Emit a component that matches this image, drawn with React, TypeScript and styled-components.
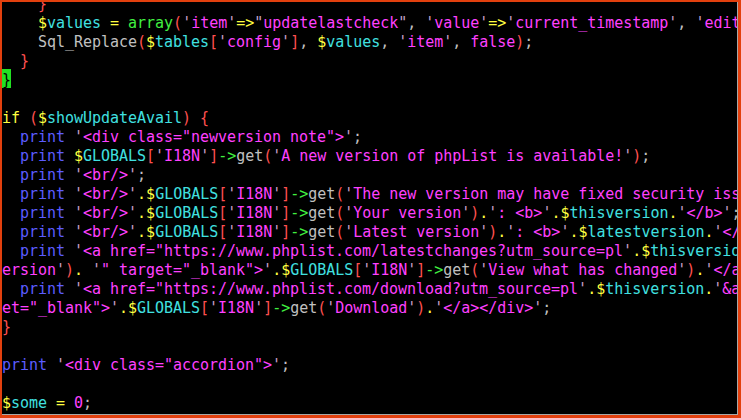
import React from "react";
import styled, { createGlobalStyle } from "styled-components";

const Global = createGlobalStyle`
  html, body { margin: 0; padding: 0; background: #000; }
  #root { width: 741px; height: 418px; }
`;

const palette: Record<string, string> = {
  n: "#c0c0c0",
  k: "#5c5cff",
  s: "#ff40ff",
  q: "#c8a0c8",
  v: "#40e0e0",
  d: "#ffff40",
  o: "#ffff40",
  p: "#ff5050",
  g: "#40f040",
  y: "#ffff40",
};

const Frame = styled.div`
  box-sizing: border-box;
  width: 741px;
  height: 418px;
  display: flex;
  background: #000;
  border-style: solid;
  border-color: #e2400e;
  border-width: 2px 3px 3px 2px;
`;

const Screen = styled.div`
  flex: 1;
  overflow: hidden;
  border-right: 1px solid #a8a8a8;
  border-bottom: 1px solid #a8a8a8;
  background: #000;
`;

const Code = styled.div`
  margin-top: -9px;
  font-family: "DejaVu Sans Mono", "Liberation Mono", monospace;
  font-size: 15px;
  letter-spacing: -0.03px;
`;

const Row = styled.div`
  height: 19px;
  line-height: 23px;
  white-space: pre;
  color: #c0c0c0;
`;

const Tok = styled.span<{ $c: string }>`
  color: ${(p) => palette[p.$c] ?? "#c0c0c0"};
`;

const Cursor = styled.span`
  display: inline-block;
  width: 9px;
  height: 19px;
  line-height: 23px;
  vertical-align: top;
  background: #22e022;
  color: #000;
`;

type Seg = [string, string];

const Q: Seg = ["q", "'"];
const DQ: Seg = ["q", '"'];
const glob: Seg[] = [
  ["d", "$"], ["v", "GLOBALS"], ["p", "["], Q, ["s", "I18N"], Q, ["p", "]"],
  ["g", "->"], ["n", "get"], ["p", "("],
];
const pr: Seg[] = [["n", "  "], ["k", "print"], ["n", " "]];
const br: Seg[] = [Q, ["s", "<br/>"], Q, ["o", "."]];

const lines: (Seg[] | "cursor")[] = [
  [["n", "    "], ["p", "}"]],
  [
    ["n", "    "], ["d", "$"], ["v", "values"], ["n", " "], ["o", "="], ["n", " "],
    ["g", "array"], ["p", "("], Q, ["s", "item"], Q, ["o", "=>"], DQ,
    ["s", "updatelastcheck"], DQ, ["n", ", "], Q, ["s", "value"], Q, ["o", "=>"],
    Q, ["s", "current_timestamp"], Q, ["n", ", "], Q, ["s", "editable"], Q,
    ["o", "=>"], ["s", "false"], ["p", ")"], ["n", ";"],
  ],
  [
    ["n", "    Sql_Replace"], ["p", "("], ["d", "$"], ["v", "tables"], ["p", "["], Q,
    ["s", "config"], Q, ["p", "]"], ["n", ", "], ["d", "$"], ["v", "values"],
    ["n", ", "], Q, ["s", "item"], Q, ["n", ", "], ["s", "false"], ["p", ")"], ["n", ";"],
  ],
  [["n", "  "], ["p", "}"]],
  "cursor",
  [],
  [
    ["y", "if"], ["n", " "], ["p", "("], ["d", "$"], ["v", "showUpdateAvail"],
    ["p", ")"], ["n", " "], ["p", "{"],
  ],
  [...pr, Q, ["s", '<div class="newversion note">'], Q, ["n", ";"]],
  [...pr, ...glob, Q, ["s", "A new version of phpList is available!"], Q, ["p", ")"], ["n", ";"]],
  [...pr, Q, ["s", "<br/>"], Q, ["n", ";"]],
  [
    ...pr, ...br, ...glob, Q,
    ["s", "The new version may have fixed security issues, so upgrading is recommended"], Q,
    ["p", ")"], ["n", ";"],
  ],
  [
    ...pr, ...br, ...glob, Q, ["s", "Your version"], Q, ["p", ")"], ["o", "."], Q,
    ["s", ": <b>"], Q, ["o", "."], ["d", "$"], ["v", "thisversion"], ["o", "."], Q,
    ["s", "</b>"], Q, ["n", ";"],
  ],
  [
    ...pr, ...br, ...glob, Q, ["s", "Latest version"], Q, ["p", ")"], ["o", "."], Q,
    ["s", ": <b>"], Q, ["o", "."], ["d", "$"], ["v", "latestversion"], ["o", "."], Q,
    ["s", "</b>"], Q, ["n", ";"],
  ],
  [
    ...pr, Q, ["s", '<a href="https://www.phplist.com/latestchanges?utm_source=pl'], Q,
    ["o", "."], ["d", "$"], ["v", "thisversion"],
  ],
  [
    ["s", "ersion"], Q, ["p", ")"], ["o", "."], ["n", " "], Q,
    ["s", '" target="_blank">'], Q, ["o", "."], ...glob, Q,
    ["s", "View what has changed"], Q, ["p", ")"], ["o", "."], Q, ["s", "</a>"], Q, ["n", ";"],
  ],
  [
    ...pr, Q, ["s", '<a href="https://www.phplist.com/download?utm_source=pl'], Q,
    ["o", "."], ["d", "$"], ["v", "thisversion"], ["o", "."], Q, ["s", "&amp;targ"],
  ],
  [
    ["s", 'et="_blank">'], Q, ["o", "."], ...glob, Q, ["s", "Download"], Q, ["p", ")"],
    ["o", "."], Q, ["s", "</a></div>"], Q, ["n", ";"],
  ],
  [["p", "}"]],
  [],
  [["k", "print"], ["n", " "], Q, ["s", '<div class="accordion">'], Q, ["n", ";"]],
  [],
  [["d", "$"], ["v", "some"], ["n", " "], ["o", "="], ["n", " "], ["s", "0"], ["n", ";"]],
];

export default function App() {
  return (
    <>
      <Global />
      <Frame>
        <Screen>
          <Code>
            {lines.map((line, i) => (
              <Row key={i}>
                {line === "cursor" ? (
                  <Cursor>{"}"}</Cursor>
                ) : line.length === 0 ? (
                  " "
                ) : (
                  line.map(([c, t], j) => (
                    <Tok key={j} $c={c}>
                      {t}
                    </Tok>
                  ))
                )}
              </Row>
            ))}
          </Code>
        </Screen>
      </Frame>
    </>
  );
}
